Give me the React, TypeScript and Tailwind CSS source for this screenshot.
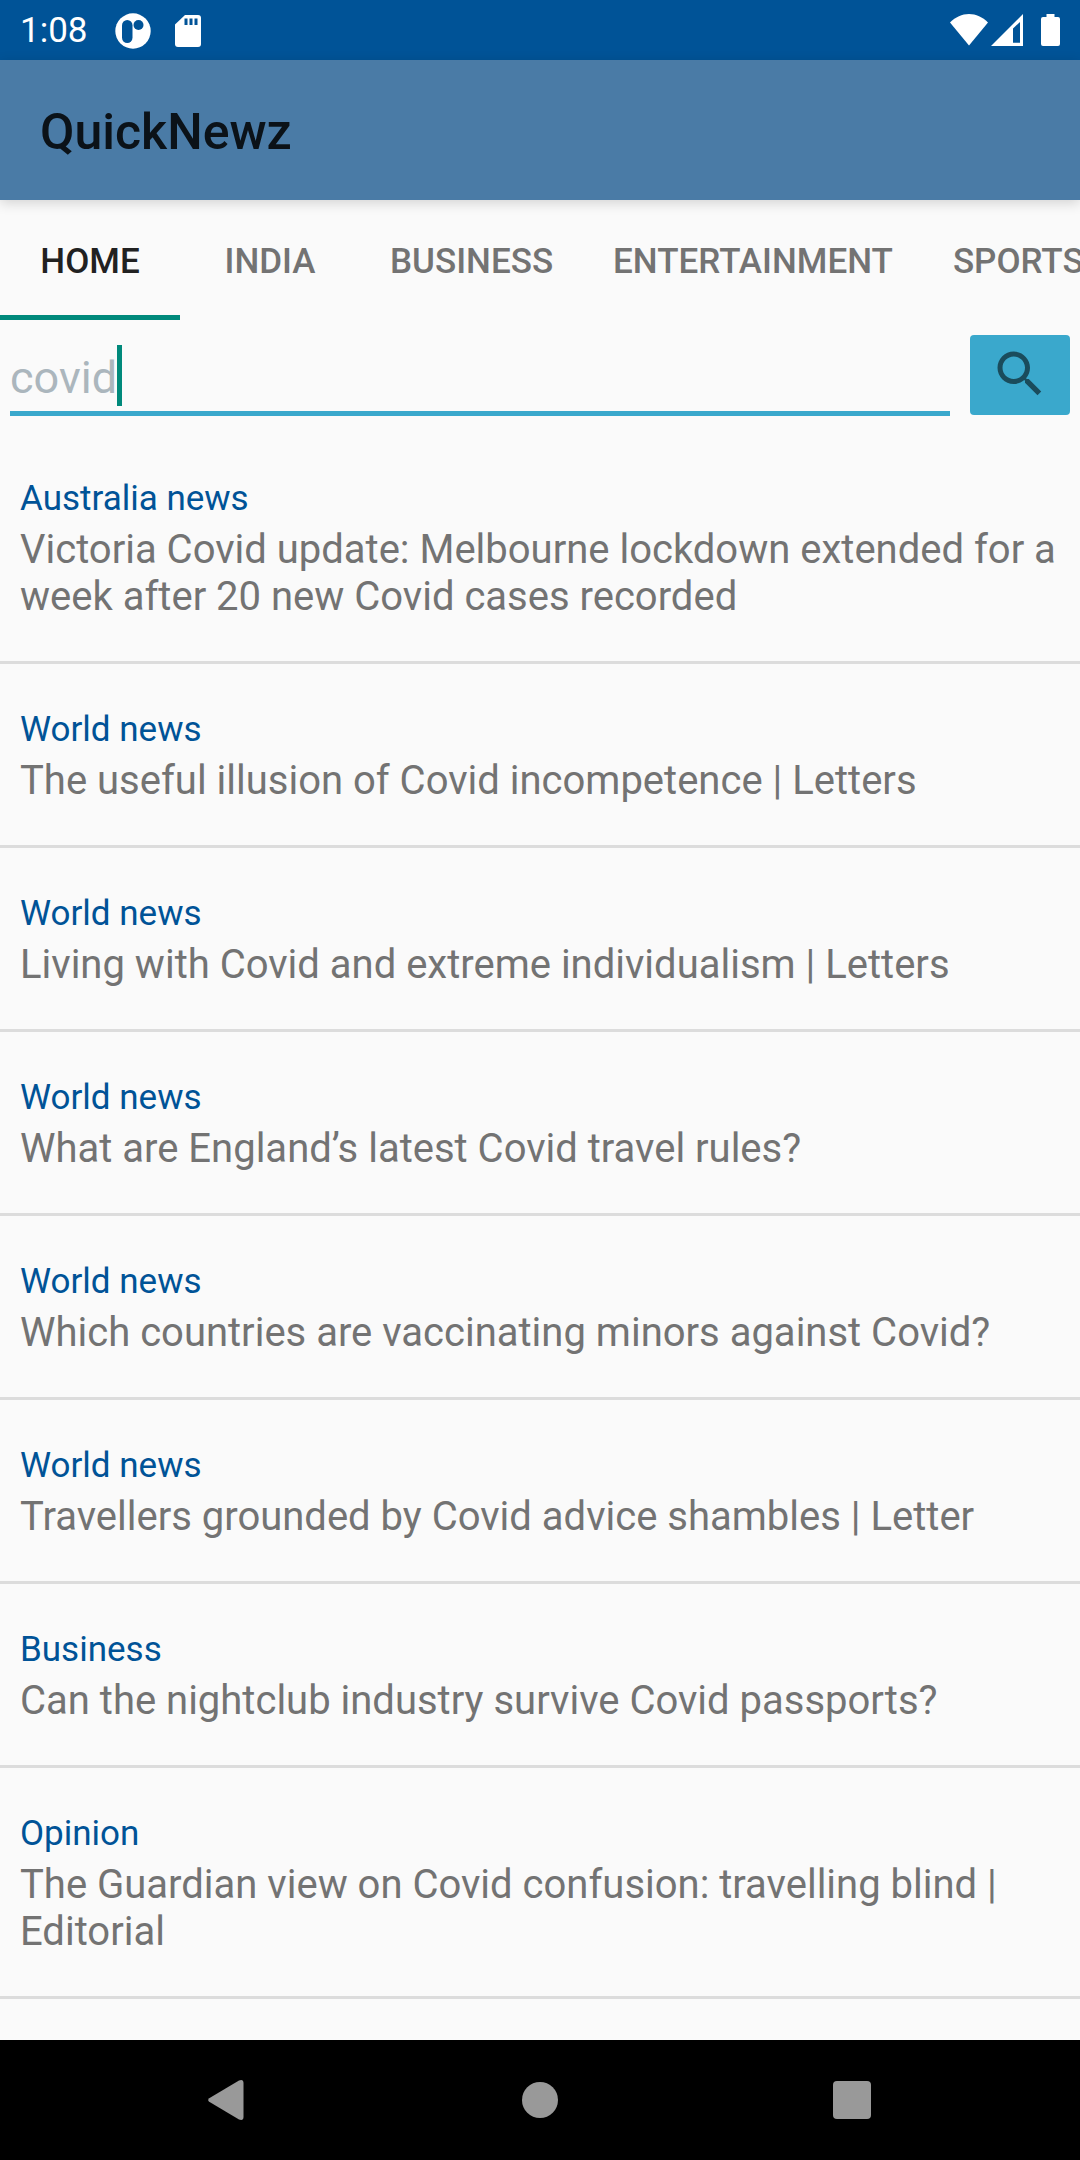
import { useState } from "react";

const tabs = ["HOME", "INDIA", "BUSINESS", "ENTERTAINMENT", "SPORTS"];

const articles = [
  { section: "Australia news", title: "Victoria Covid update: Melbourne lockdown extended for a week after 20 new Covid cases recorded" },
  { section: "World news", title: "The useful illusion of Covid incompetence | Letters" },
  { section: "World news", title: "Living with Covid and extreme individualism | Letters" },
  { section: "World news", title: "What are England’s latest Covid travel rules?" },
  { section: "World news", title: "Which countries are vaccinating minors against Covid?" },
  { section: "World news", title: "Travellers grounded by Covid advice shambles | Letter" },
  { section: "Business", title: "Can the nightclub industry survive Covid passports?" },
  { section: "Opinion", title: "The Guardian view on Covid confusion: travelling blind | Editorial" },
];

function StatusBar() {
  return (
    <div className="flex h-[60px] shrink-0 items-center justify-between bg-[#005397] pl-5 pr-5 text-white">
      <div className="flex items-center pt-px">
        <span className="text-[35px] leading-[41px]">1:08</span>
        <svg className="ml-[27px] size-9" viewBox="0 0 36 36" aria-hidden="true">
          <circle cx="18" cy="18" r="17.7" fill="currentColor" />
          <rect x="7" y="7" width="10.5" height="23" rx="5.25" fill="#005397" />
          <circle cx="23.5" cy="12" r="5" fill="#005397" />
        </svg>
        <svg className="ml-6 h-8 w-[26px]" viewBox="0 0 26 32" aria-hidden="true">
          <path fill="currentColor" d="M10 0h13a3 3 0 0 1 3 3v26a3 3 0 0 1-3 3H3a3 3 0 0 1-3-3V9.500z" />
          <path fill="#005397" d="M9.500 3.500h3v6.500h-3zM14.500 3.500h3v6.500h-3zM19.500 3.500h3v6.500h-3z" />
        </svg>
      </div>
      <div className="flex items-center">
        <svg className="h-8 w-[38px]" viewBox="0 0 38 32" aria-hidden="true">
          <path fill="currentColor" d="M0 8.500C5.500 3 12 0 19 0s13.500 3 19 8.500L19 31.500z" />
        </svg>
        <svg className="ml-[3px] h-8 w-8" viewBox="0 0 32 32" aria-hidden="true">
          <path fill="currentColor" fillRule="evenodd" d="M32 0v32H0zM29 8l-7 6.500V28.700h7z" />
        </svg>
        <svg className="ml-[18px] h-8 w-[19px]" viewBox="0 0 19 32" aria-hidden="true">
          <path fill="currentColor" d="M5.500 0h8v3H17a2 2 0 0 1 2 2v25a2 2 0 0 1-2 2H2a2 2 0 0 1-2-2V5a2 2 0 0 1 2-2h3.500z" />
        </svg>
      </div>
    </div>
  );
}

function SearchBar() {
  const [query, setQuery] = useState("covid");
  return (
    <form className="flex shrink-0 gap-5 px-[10px] pt-[15px] pb-[18px]" onSubmit={(e) => e.preventDefault()}>
      <div className="relative mb-[-1px] flex min-w-0 flex-1 border-b-[5px] border-[#3aa8cc]">
        <input
          type="text"
          aria-label="Search news"
          value={query}
          onChange={(e) => setQuery(e.target.value)}
          className="w-full bg-transparent pt-2 text-[45px] leading-[53px] text-[#abb6bd] caret-[#00897b] outline-none"
        />
        <span className="absolute left-[107px] top-[10px] h-[61px] w-[5px] bg-[#00897b]" />
      </div>
      <button type="submit" aria-label="Search" className="flex h-20 w-[100px] items-center justify-center rounded bg-[#3aa8cc] text-[#1a4c5c]">
        <svg className="mb-[2px] size-[60px]" viewBox="0 0 24 24" aria-hidden="true">
          <path fill="currentColor" d="M15.500 14h-.79l-.28-.27C15.410 12.590 16 11.110 16 9.500 16 5.910 13.090 3 9.500 3S3 5.910 3 9.500 5.910 16 9.500 16c1.610 0 3.090-.59 4.230-1.570l.27.28v.79l5 4.990L20.490 19l-4.990-5zm-6 0C7.010 14 5 11.990 5 9.500S7.010 5 9.500 5 14 7.010 14 9.500 11.990 14 9.500 14z" />
        </svg>
      </button>
    </form>
  );
}

function NavigationBar() {
  return (
    <nav aria-label="System" className="flex h-[120px] shrink-0 bg-black px-[72px] text-[#999999]">
      <button type="button" aria-label="Back" className="flex flex-1 items-center justify-center">
        <svg className="mr-1 h-10 w-9" viewBox="0 0 36 40" aria-hidden="true">
          <path fill="currentColor" d="M1.200 18.200 31 .5Q35.500-1 35.500 3v34q0 4-4.500 2.500L1.200 21.800Q-.8 20 1.200 18.200z" />
        </svg>
      </button>
      <button type="button" aria-label="Home" className="flex flex-1 items-center justify-center">
        <span className="size-9 rounded-full bg-current" />
      </button>
      <button type="button" aria-label="Recent apps" className="flex flex-1 items-center justify-center">
        <span className="size-[38px] rounded bg-current" />
      </button>
    </nav>
  );
}

export default function App() {
  const [active, setActive] = useState("HOME");
  return (
    <div className="flex h-screen flex-col overflow-hidden bg-[#fafafa] font-[Roboto,sans-serif]">
      <StatusBar />
      <header className="z-10 flex h-[140px] shrink-0 items-center bg-[#4a7ba6] px-10 pt-1 shadow-[0_3px_12px_rgba(0,0,0,0.16)]">
        <h1 className="text-[50px] font-medium leading-[59px] text-[#0b1218]">QuickNewz</h1>
      </header>
      <div role="tablist" className="flex h-[120px] shrink-0 overflow-hidden">
        {tabs.map((tab) => (
          <button
            key={tab}
            type="button"
            role="tab"
            aria-selected={active === tab}
            onClick={() => setActive(tab)}
            className={`min-w-[180px] shrink-0 border-b-[5px] px-[30px] pt-[7px] text-[35px] font-medium leading-[41px] ${
              active === tab ? "border-[#00897b] text-[#212121]" : "border-transparent text-[#737373]"
            }`}
          >
            {tab}
          </button>
        ))}
      </div>
      <SearchBar />
      <main className="min-h-0 flex-1 overflow-hidden">
        <ul>
          {articles.map((article) => (
            <li key={article.title} className="border-b-[3px] border-[#dcdcdc] px-5 pb-[41px] pt-[45px]">
              <p className="text-[35px] leading-[41px] text-[#005397]">{article.section}</p>
              <h2 className="mt-[7px] text-[40px] leading-[47px] text-[#737373]">{article.title}</h2>
            </li>
          ))}
        </ul>
      </main>
      <NavigationBar />
    </div>
  );
}
